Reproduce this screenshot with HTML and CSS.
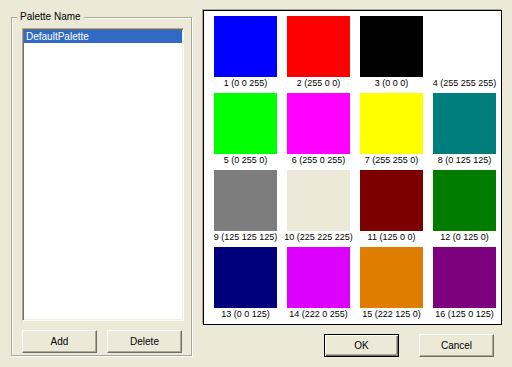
FILE: index.html
```html
<!DOCTYPE html>
<html lang="en">
<head>
    <meta charset="UTF-8">
    <title>Palette Editor</title>
    <link rel="stylesheet" href="styles.css">
</head>
<body>
    <div class="dialog">
        <div class="group">
            <span class="group-title">Palette Name</span>
            <div class="listbox">
                <div class="list-item selected">DefaultPalette</div>
            </div>
            <div class="button-row">
                <button class="btn">Add</button>
                <button class="btn">Delete</button>
            </div>
        </div>
        <div class="right-col">
            <div class="palette" id="palette"></div>
            <div class="button-row right">
                <button class="btn default">OK</button>
                <button class="btn">Cancel</button>
            </div>
        </div>
    </div>
    <script>
        const colors = [
            [0, 0, 255], [255, 0, 0], [0, 0, 0], [255, 255, 255],
            [0, 255, 0], [255, 0, 255], [255, 255, 0], [0, 125, 125],
            [125, 125, 125], [225, 225, 225], [125, 0, 0], [0, 125, 0],
            [0, 0, 125], [222, 0, 255], [222, 125, 0], [125, 0, 125]
        ];
        const palette = document.getElementById("palette");

        colors.forEach((rgb, i) => {
            const cell = document.createElement("div");
            cell.classList.add("cell");
            const swatch = document.createElement("div");
            swatch.classList.add("swatch");
            // entry 10 shows as the dialog face colour on screen
            swatch.style.background = i === 9 ? "#ece9d8" : `rgb(${rgb.join(",")})`;
            const label = document.createElement("div");
            label.classList.add("label");
            label.textContent = `${i + 1} (${rgb.join(" ")})`;
            cell.appendChild(swatch);
            cell.appendChild(label);
            palette.appendChild(cell);
        });
    </script>
</body>
</html>
```

FILE: styles.css
```css
body {
    margin: 0;
    padding: 10px 0 0 11px;
    background: #ece9d8;
    font-family: 'Liberation Sans', Arial, sans-serif;
    font-size: 10px;
    color: #000;
}
.dialog {
    display: flex;
    align-items: flex-start;
    gap: 11px;
}
.group {
    position: relative;
    margin-top: 7px;
    width: 162px;
    padding: 10px 7px 2px 10px;
    border: 1px solid #aca899;
    box-shadow: 1px 1px 0 #fff, inset 1px 1px 0 #fff;
}
.group-title {
    position: absolute;
    top: -7px;
    left: 5px;
    padding: 0 3px;
    line-height: 12px;
    background: #ece9d8;
}
.listbox {
    height: 289px;
    background: #fff;
    border-top: 1px solid #aca899;
    border-left: 1px solid #aca899;
    border-right: 1px solid #fff;
    border-bottom: 1px solid #fff;
    box-shadow: inset 1px 1px 0 #716f64, inset -1px -1px 0 #f1efe2;
    padding: 1px;
}
.list-item {
    height: 13px;
    line-height: 13px;
    padding-left: 2px;
    white-space: nowrap;
}
.list-item.selected {
    background: #316ac5;
    color: #fff;
}
.button-row {
    display: flex;
    gap: 10px;
    margin-top: 9px;
}
.button-row.right {
    justify-content: flex-end;
    gap: 20px;
    padding-right: 8px;
}
.btn {
    width: 75px;
    height: 23px;
    padding: 0;
    font-family: inherit;
    font-size: 10px;
    color: #000;
    background: #ece9d8;
    border-top: 1px solid #fff;
    border-left: 1px solid #fff;
    border-right: 1px solid #716f64;
    border-bottom: 1px solid #716f64;
    box-shadow: inset -1px -1px 0 #aca899;
}
.btn.default {
    border: 1px solid #000;
    box-shadow: inset 1px 1px 0 #fff, inset -1px -1px 0 #716f64, inset -2px -2px 0 #aca899;
}
.right-col {
    display: flex;
    flex-direction: column;
}
.palette {
    display: grid;
    grid-template-columns: repeat(4, 63px);
    column-gap: 10px;
    padding: 5px 5px 0 10px;
    background: #fff;
    border: 1px solid #000;
    box-shadow: -1px -1px 0 #aca899;
}
.cell {
    display: flex;
    flex-direction: column;
    align-items: center;
    height: 77px;
}
.swatch {
    width: 63px;
    height: 61px;
}
.label {
    font-size: 9px;
    line-height: 12px;
    white-space: nowrap;
}
```
